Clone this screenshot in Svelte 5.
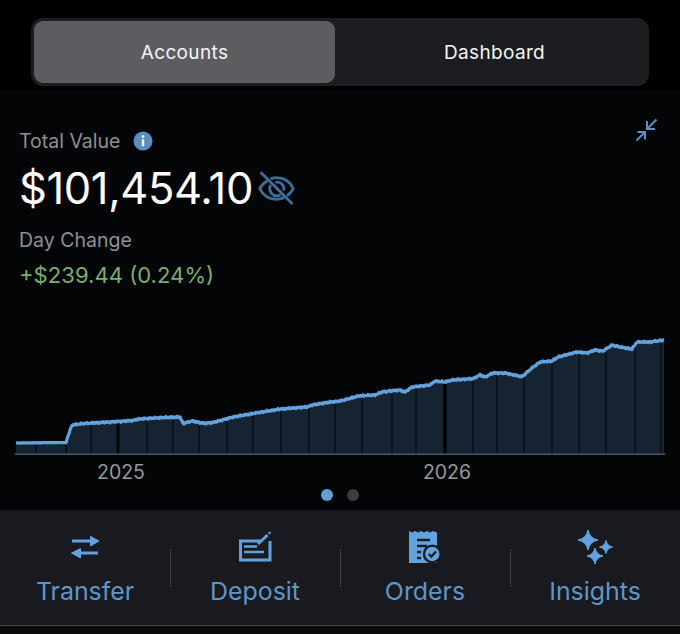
<script>
	const tabs = ['Accounts', 'Dashboard'];
	let activeTab = 'Accounts';

	// rough trace of the portfolio curve in chart coordinates
	const trace = [
		[16, 443], [66, 442.5], [68, 436], [72, 425], [83, 423.5], [110, 422], [133, 420.5], [138, 419],
		[163, 417.5], [180, 417], [183, 423.5], [192, 421], [205, 423.5], [215, 422], [233, 417], [253, 413.5],
		[280, 409], [307, 407], [312, 405], [327, 402.5], [340, 401], [360, 395.7], [375, 395], [383, 391.7],
		[400, 390], [405, 392], [412, 387], [430, 385], [435, 381], [445, 382], [452, 380], [473, 378.7],
		[480, 375], [485, 377], [493, 373], [505, 373], [522, 376.7], [532, 368], [540, 362], [552, 361],
		[558, 357], [577, 352], [587, 353], [595, 350], [603, 351], [612, 345], [620, 347], [632, 349],
		[637, 342], [650, 342], [664, 340]
	];
	const baseline = 454;

	function sample() {
		const pts = [];
		for (let i = 0; i < trace.length - 1; i++) {
			const [x0, y0] = trace[i];
			const [x1, y1] = trace[i + 1];
			const steps = Math.max(1, Math.round(x1 - x0));
			for (let s = 0; s < steps; s++) {
				const x = x0 + ((x1 - x0) * s) / steps;
				const flat = x < 66 ? 0.1 : 0.6;
				const noise = flat * (Math.sin(x * 2.3) + Math.sin(x * 5.1) * 0.5);
				pts.push([x, y0 + ((y1 - y0) * s) / steps + noise]);
			}
		}
		pts.push(trace[trace.length - 1]);
		return pts;
	}

	const points = sample();
	const linePath = points.map(([x, y], i) => `${i ? 'L' : 'M'}${x.toFixed(1)} ${y.toFixed(1)}`).join('');
	const areaPath = `${linePath}L664 ${baseline}L16 ${baseline}Z`;

	// dark month separators under the curve
	const separators = [
		[36, 1], [66, 1.5], [91, 1], [118, 3], [147, 1], [173, 1], [199, 1], [227, 1], [253, 1], [281, 1], [309, 1],
		[335, 1], [362, 1], [392, 1], [416, 1], [445, 3.5], [473, 1], [497, 1], [524, 1], [552, 1], [579, 1],
		[606, 1], [635, 1], [661, 1]
	];

	function curveY(x) {
		const p = points.find((pt) => pt[0] >= x);
		return p ? p[1] + 2 : baseline;
	}

	function star(cx, cy, r) {
		const k = r * 0.16;
		return `M${cx} ${cy - r}Q${cx + k} ${cy - k} ${cx + r} ${cy}Q${cx + k} ${cy + k} ${cx} ${cy + r}Q${cx - k} ${cy + k} ${cx - r} ${cy}Q${cx - k} ${cy - k} ${cx} ${cy - r}Z`;
	}

	const actions = ['Transfer', 'Deposit', 'Orders', 'Insights'];
</script>

<div class="screen">
	<div class="tabs">
		{#each tabs as tab}
			<button class="tab" class:active={tab === activeTab} onclick={() => (activeTab = tab)}>{tab}</button>
		{/each}
	</div>

	<section class="summary">
		<div class="head">
			<div>
				<div class="label-row">
					<span class="label">Total Value</span>
					<svg class="info" viewBox="0 0 20 20">
						<circle cx="10" cy="10" r="9.5" fill="#5b8fc1" />
						<circle cx="10" cy="5.6" r="1.4" fill="#eef3f8" />
						<rect x="8.8" y="8.2" width="2.4" height="7" fill="#eef3f8" />
					</svg>
				</div>
				<div class="value-row">
					<span class="value">$101,454.10</span>
					<svg class="eye" viewBox="0 0 38 36" fill="none" stroke="#3e6c97" stroke-width="3" stroke-linecap="round">
						<path d="M9 10.5C5.5 12.5 3 15.5 1.8 18 5 25 11.5 29 19 29c2.5 0 5-.5 7-1.4" />
						<path d="M14 7.6C15.6 7.2 17.3 7 19 7c7.5 0 14 4 17.2 11-1.2 2.6-3 4.9-5.4 6.7" />
						<path d="M12.5 15.5c-2 5.5 3 11.5 9.5 9.5" />
						<path d="M19 11.5c4-.5 8 3 7.6 7.5" />
						<path d="M3.5 2 L34.5 33" />
					</svg>
				</div>
				<div class="label change-label">Day Change</div>
				<div class="change">+$239.44 (0.24%)</div>
			</div>
			<svg class="collapse" viewBox="0 0 24 24" fill="none" stroke="#5b8fc1" stroke-width="2">
				<path d="M21.5 1.5 L12 11" />
				<path d="M12 3 V11 H20" />
				<path d="M1.5 22.5 L10 14" />
				<path d="M2.5 14 H10 V21.5" />
			</svg>
		</div>

		<svg class="chart" viewBox="0 0 680 156">
			<g transform="translate(0 -330)">
				<path d={areaPath} fill="#162331" />
				{#each separators as [x, w]}
					<rect x={x - w / 2} y={curveY(x)} width={w} height={baseline - curveY(x)} fill="#040507" />
				{/each}
				<rect x="15" y="453.5" width="650" height="1.5" fill="#4a5666" />
				<path d={linePath} fill="none" stroke="#62a3df" stroke-width="3.2" stroke-linejoin="round" />
				<text x="121" y="479" class="year">2025</text>
				<text x="447" y="479" class="year">2026</text>
			</g>
		</svg>

		<div class="dots">
			<span class="dot on"></span>
			<span class="dot"></span>
		</div>
	</section>

	<nav class="actions">
		{#each actions as name}
			<div class="action">
				<svg class="icon" viewBox="0 0 36 36">
					{#if name === 'Transfer'}
						<g fill="#62a3df" stroke="#62a3df">
							<path d="M5 13 H25" fill="none" stroke-width="3" />
							<path d="M23.5 8.5 L32 13 L23.5 18 Z" stroke-width="1" stroke-linejoin="round" />
							<path d="M12 25 H31" fill="none" stroke-width="3" />
							<path d="M13.5 20.5 L4.5 25 L13.5 30 Z" stroke-width="1" stroke-linejoin="round" />
						</g>
					{:else if name === 'Deposit'}
						<g fill="none" stroke="#62a3df">
							<path d="M25 13 H3.5 V32 H33 V13" stroke-width="3" />
							<path d="M7 18.5 H20 M7 24 H27" stroke-width="2.4" />
							<path d="M21 16 L30.5 7" stroke-width="3" />
							<circle cx="32.5" cy="5" r="1.3" fill="#62a3df" stroke="none" />
						</g>
					{:else if name === 'Orders'}
						<path
							d="M2 3 L5 4.5 L8 3 L11 4.5 L14 3 L17 4.5 L20 3 L23 4.5 L26 3 L30 4.5 V35 H2 Z"
							fill="#62a3df"
						/>
						<path d="M10 12 H23 M10 18 H20 M10 24 H14 M10 30 H14" stroke="#181a1f" stroke-width="2.4" />
						<circle cx="25.3" cy="26" r="9.5" fill="#181a1f" />
						<circle cx="25.3" cy="26" r="7.2" fill="#62a3df" />
						<path d="M21.8 26 L24.4 28.6 L29 23.6" fill="none" stroke="#181a1f" stroke-width="2.2" />
					{:else}
						<g fill="#62a3df" stroke="#62a3df" stroke-width="1" stroke-linejoin="round">
							<path d={star(11, 12, 10)} />
							<path d={star(29, 19, 6.5)} />
							<path d={star(18, 28, 8)} />
						</g>
					{/if}
				</svg>
				<span class="action-name">{name}</span>
			</div>
		{/each}
	</nav>
	<div class="foot"></div>
</div>

<style>
	:global(body) {
		margin: 0;
		background: #000;
	}

	.screen {
		width: 680px;
		height: 634px;
		overflow: hidden;
		display: flex;
		flex-direction: column;
		font-family: Inter, 'Liberation Sans', sans-serif;
	}

	.tabs {
		display: flex;
		height: 62px;
		margin: 18px 31px 4px;
		padding: 3px;
		background: #1c1d20;
		border-radius: 12px;
	}

	.tab {
		flex: 1;
		border: 0;
		padding: 0 0 0 8px;
		background: transparent;
		color: #f4f4f5;
		font: inherit;
		font-size: 19px;
		letter-spacing: 0.35px;
		border-radius: 9px;
	}

	.tab.active {
		flex: 0 0 301px;
		padding: 0;
		background: #5d5d61;
	}

	.summary {
		background: #040507;
		height: 420px;
		flex: none;
		box-sizing: border-box;
		padding-top: 38px;
		display: flex;
		flex-direction: column;
	}

	.head {
		display: flex;
		justify-content: space-between;
		align-items: flex-start;
		padding: 0 22px 0 19px;
		height: 162px;
	}

	.label-row {
		display: flex;
		align-items: center;
		gap: 13px;
		height: 26px;
	}

	.label {
		color: #8d9096;
		font-size: 19.5px;
	}

	.info {
		width: 20px;
		height: 20px;
	}

	.value-row {
		display: flex;
		align-items: center;
		gap: 5px;
		height: 50px;
		margin-top: 9px;
	}

	.value {
		color: #fff;
		font-size: 43.5px;
		letter-spacing: -0.4px;
	}

	.eye {
		width: 37px;
		height: 35px;
	}

	.change-label {
		margin-top: 14px;
		line-height: 26px;
	}

	.change {
		margin-top: 9px;
		color: #7bad6e;
		font-size: 22.1px;
		line-height: 26px;
	}

	.collapse {
		width: 24px;
		height: 24px;
		margin-top: -10px;
		margin-right: -1px;
	}

	.chart {
		display: block;
		width: 680px;
		height: 156px;
		margin-top: 40px;
		flex: none;
	}

	.year {
		fill: #96989c;
		font-size: 19.5px;
		text-anchor: middle;
	}

	.dots {
		display: flex;
		justify-content: center;
		gap: 14px;
		margin-top: 3px;
	}

	.dot {
		width: 12px;
		height: 12px;
		border-radius: 50%;
		background: #3c3d41;
	}

	.dot.on {
		background: #629fd9;
	}

	.actions {
		display: grid;
		grid-template-columns: repeat(4, 170px);
		height: 115px;
		flex: none;
		background: #181a1f;
		border-bottom: 1px solid #4a4b4e;
	}

	.action {
		display: flex;
		flex-direction: column;
		align-items: center;
		padding-top: 18px;
		position: relative;
	}

	.action + .action::before {
		content: '';
		position: absolute;
		left: 0;
		top: 39px;
		height: 38px;
		width: 1px;
		background: #3d4045;
	}

	.icon {
		width: 36px;
		height: 36px;
	}

	.action-name {
		margin-top: 11px;
		color: #5f95c9;
		font-size: 24.9px;
		line-height: 32px;
	}

	.foot {
		flex: 1;
		background: #0c0c0e;
	}
</style>
